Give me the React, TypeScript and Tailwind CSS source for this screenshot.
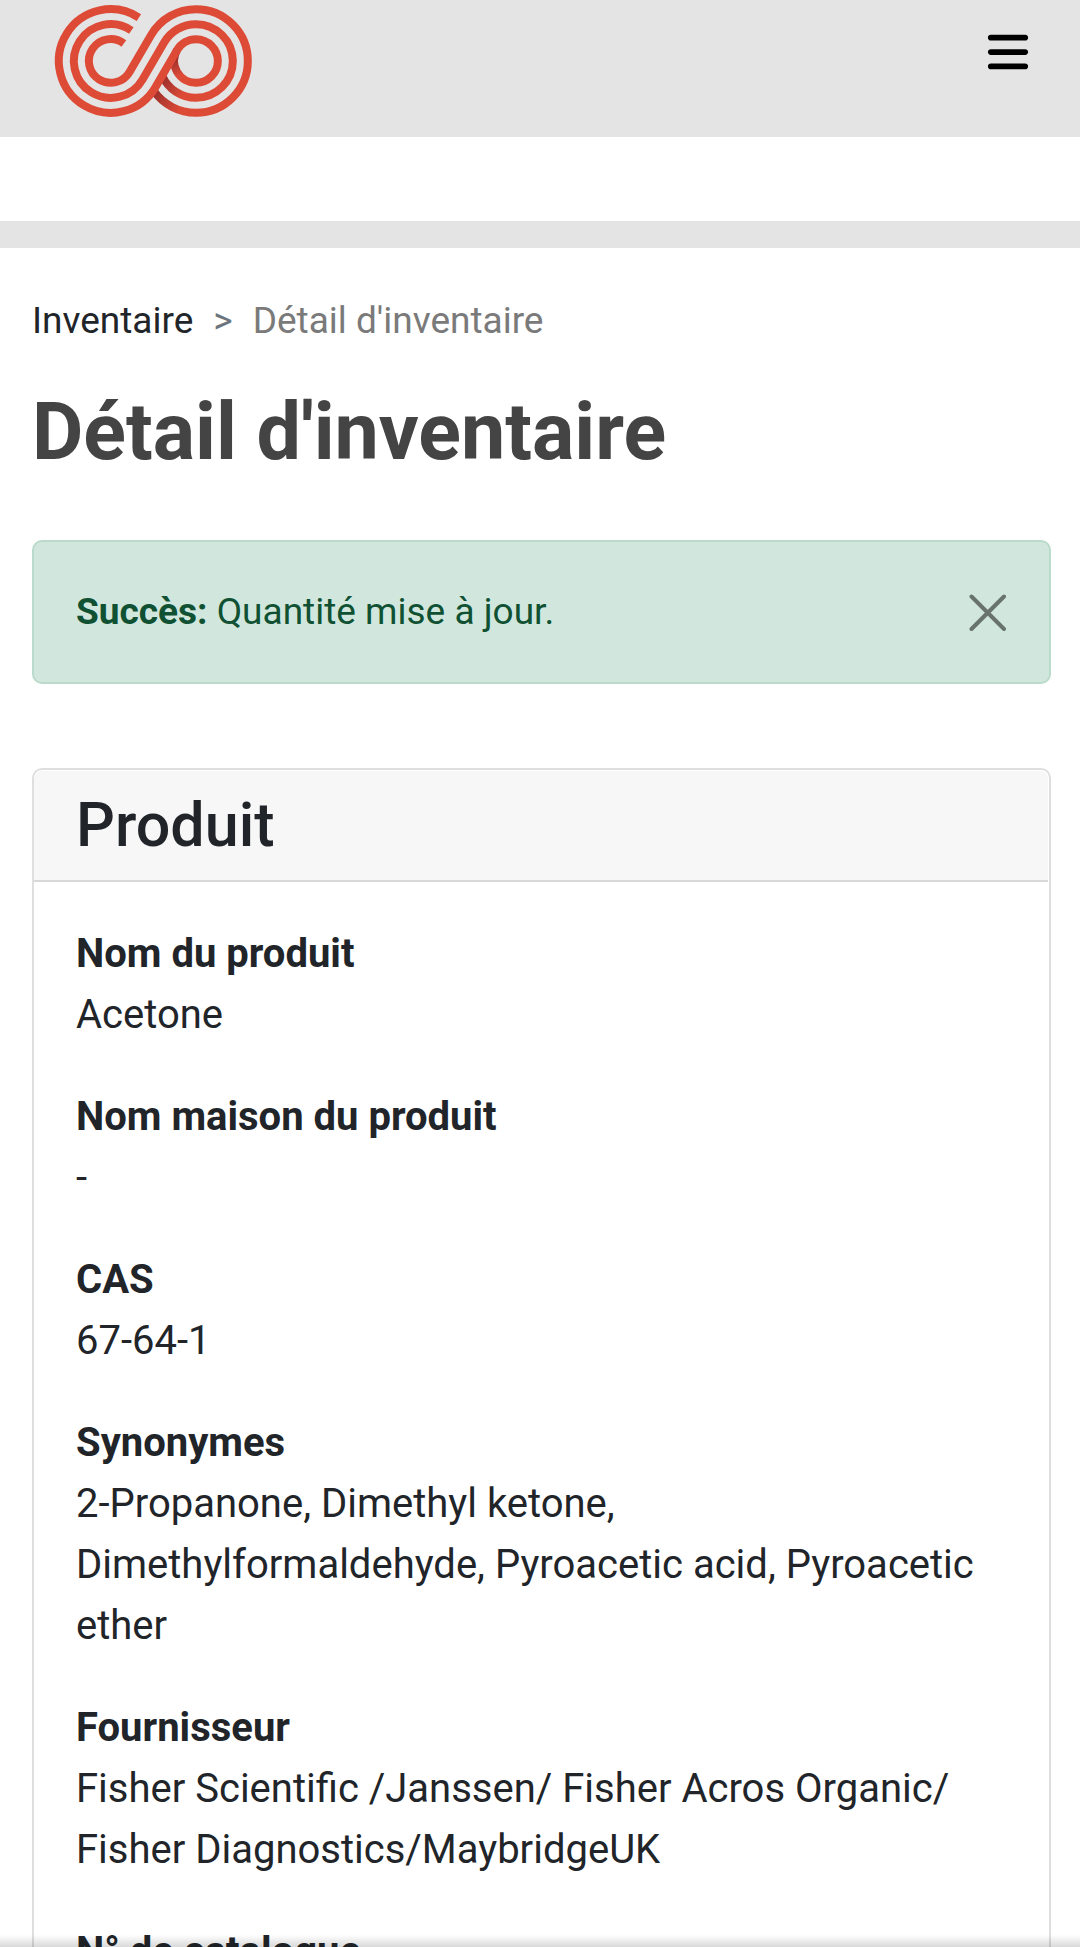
import React, { useState } from 'react';
import { FaBars } from 'react-icons/fa6';

interface Field {
    label: string;
    value: string;
}

const fields: Field[] = [
    { label: 'Nom du produit', value: 'Acetone' },
    { label: 'Nom maison du produit', value: '-' },
    { label: 'CAS', value: '67-64-1' },
    { label: 'Synonymes', value: '2-Propanone, Dimethyl ketone, Dimethylformaldehyde, Pyroacetic acid, Pyroacetic ether' },
    { label: 'Fournisseur', value: 'Fisher Scientific /Janssen/ Fisher Acros Organic/ Fisher Diagnostics/MaybridgeUK' },
    { label: 'N° de catalogue', value: '' },
];

function Logo() {
    return (
        <svg viewBox="0 0 690 411" className="w-[230px] h-[137px]" fill="none" strokeWidth="24" aria-hidden="true">
            <defs>
                <linearGradient id="shadeOuter" gradientUnits="userSpaceOnUse" x1="342" y1="278" x2="420" y2="332">
                    <stop offset="0" stopColor="#9c2f2c" />
                    <stop offset="1" stopColor="#dd4b37" />
                </linearGradient>
                <linearGradient id="shadeMiddle" gradientUnits="userSpaceOnUse" x1="370" y1="236" x2="430" y2="284">
                    <stop offset="0" stopColor="#9c2f2c" />
                    <stop offset="1" stopColor="#dd4b37" />
                </linearGradient>
                <linearGradient id="shadeInner" gradientUnits="userSpaceOnUse" x1="402" y1="176" x2="424" y2="226">
                    <stop offset="0" stopColor="#9c2f2c" />
                    <stop offset="1" stopColor="#dd4b37" />
                </linearGradient>
            </defs>
            {/* right loops, passing under the crossing */}
            <g stroke="#dd4b37">
                <path d="M468 27.5A155.5 155.5 0 0 1 468 338.5" />
                <path d="M468 72.5A110.5 110.5 0 0 1 468 293.5" />
                <path d="M468 117.5A65.5 65.5 0 0 1 468 248.5" />
            </g>
            <path d="M469 338.5A155.5 155.5 0 0 1 340 271" stroke="url(#shadeOuter)" />
            <path d="M469 293.5A110.5 110.5 0 0 1 366.8 227.3" stroke="url(#shadeMiddle)" />
            <path d="M469 248.5A65.5 65.5 0 0 1 411.3 150.2" stroke="url(#shadeInner)" />
            {/* left loops running up into the right ones */}
            <g stroke="#dd4b37">
                <path d="M251.5 130.5A65.5 65.5 0 1 0 268.7 215.8L333.3 105.2A155.5 155.5 0 0 1 469 27.5" />
                <path d="M274 91.5A110.5 110.5 0 1 0 307.7 238.3L372.3 127.7A110.5 110.5 0 0 1 469 72.5" />
                <path d="M296.7 52.6A155.5 155.5 0 1 0 346.7 260.8L411.3 150.2A65.5 65.5 0 0 1 469 117.5" />
            </g>
        </svg>
    );
}

export default function App() {
    const [showAlert, setShowAlert] = useState(true);

    return (
        <div className="h-screen overflow-y-auto [scrollbar-width:none] bg-white text-[#212529] font-['Roboto',sans-serif]">
            {/* Navbar */}
            <header className="flex justify-between items-start pl-10 pr-[49px] bg-[#e4e4e4]">
                <a href="#" aria-label="Accueil">
                    <Logo />
                </a>
                <button type="button" aria-label="Menu" className="mt-[29px] text-black">
                    <FaBars className="w-[46px] h-[46px]" />
                </button>
            </header>
            <div className="mt-[84px] h-[27px] bg-[#e4e4e4]" />

            <main className="pl-8 pr-[29px] pt-[46px]">
                {/* Breadcrumb */}
                <nav className="flex gap-5 text-[37px] leading-[54px]">
                    <a href="#">Inventaire</a>
                    <span className="text-[#6c757d]">&gt;</span>
                    <span className="text-[#7a7a7a]">Détail d'inventaire</span>
                </nav>

                <h1 className="mt-9 text-[79px] leading-[96px] font-bold text-[#444444]">Détail d'inventaire</h1>

                {/* Success message */}
                {showAlert && (
                    <div role="alert" className="mt-[60px] flex justify-between items-center px-[42px] py-[43px] border-2 border-[#badbcc] rounded-[10px] bg-[#d1e7dd] text-[#0f5132]">
                        <p className="text-[37px] leading-[54px]">
                            <strong className="font-bold">Succès:</strong> Quantité mise à jour.
                        </p>
                        <button type="button" aria-label="Fermer" onClick={() => setShowAlert(false)}>
                            <svg viewBox="0 0 38 38" className="w-[38px] h-[38px]" fill="none" stroke="#68736e" strokeWidth="4" strokeLinecap="round">
                                <path d="M2.5 3.5L35 36M35 3.5L2.5 36" />
                            </svg>
                        </button>
                    </div>
                )}

                {/* Product card */}
                <section className="mt-[84px] pt-px pr-px border-2 border-[#dfdfdf] rounded-[10px]">
                    <h2 className="px-[42px] py-[18px] border-b-2 border-[#d8d8d8] rounded-t-[8px] bg-[#f7f7f7] text-[61px] leading-[73px] font-medium">
                        Produit
                    </h2>
                    <dl className="flex flex-col gap-[41px] px-[42px] py-[41px] text-[40px] leading-[61px]">
                        {fields.map((field) => (
                            <div key={field.label}>
                                <dt className="font-bold">{field.label}</dt>
                                <dd>{field.value}</dd>
                            </div>
                        ))}
                    </dl>
                </section>
            </main>

            <div className="fixed inset-x-0 bottom-0 h-3 bg-linear-to-b from-transparent to-black/15" />
        </div>
    );
}
